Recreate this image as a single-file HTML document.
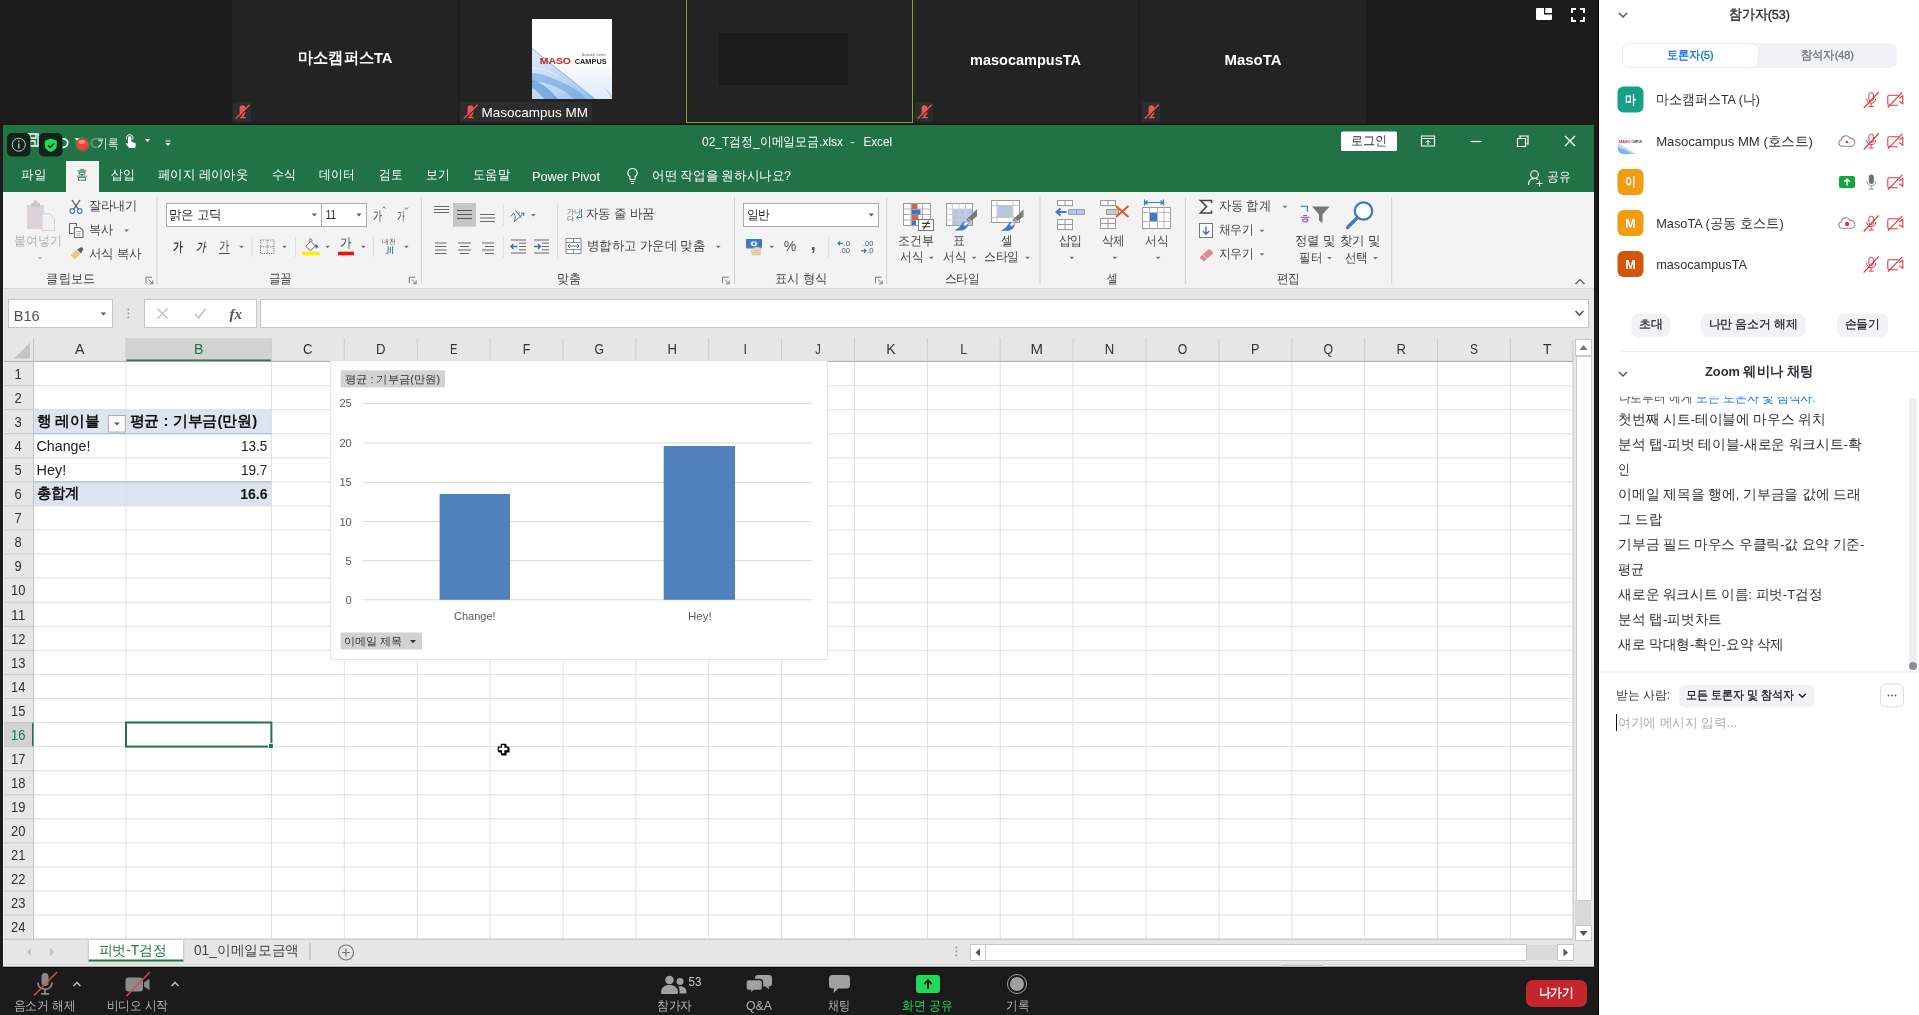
<!DOCTYPE html>
<html><head><meta charset="utf-8"><title>Zoom</title>
<style>
*{box-sizing:border-box;margin:0;padding:0}
html,body{width:1919px;height:1015px;overflow:hidden;background:#1b1b1b;font-family:"Liberation Sans",sans-serif;}
.a{position:absolute}
.t{position:absolute;white-space:nowrap;line-height:1}
svg{position:absolute;overflow:visible}
</style></head><body>
<!-- p1_zoom -->
<div class="a" style="left:232px;top:0;width:226px;height:123px;background:#232323"></div>
<div class="a" style="left:459px;top:0;width:226px;height:123px;background:#232323"></div>
<div class="a" style="left:686px;top:0;width:226px;height:123px;background:#232323"></div>
<div class="a" style="left:913px;top:0;width:226px;height:123px;background:#232323"></div>
<div class="a" style="left:1140px;top:0;width:226px;height:123px;background:#232323"></div>
<div class="a" style="left:686px;top:-2px;width:227px;height:125px;border:1px solid #86a81f"></div>
<div class="a" style="left:719px;top:33px;width:129px;height:52px;background:#1b1b1b"></div>
<div class="a" style="left:233px;top:102px;width:18px;height:20px;background:#2d2d2d;border-radius:2px"></div>
<svg style="left:233.3px;top:102.3px" width="18" height="20" viewBox="0 0 18 20">
<rect x="6.6" y="3.3" width="5.7" height="10.2" rx="2.85" fill="#f05454"/>
<path d="M9.5 13v2.5" stroke="#f05454" stroke-width="2.2"/>
<path d="M6.8 15.6h6" stroke="#f05454" stroke-width="1.3"/>
<path d="M3.7 17.3L17.5 3.5" stroke="#2d2d2d" stroke-width="1.3"/>
<path d="M2.8 16.5L16.6 2.7" stroke="#f05454" stroke-width="1.3"/>
</svg>
<div class="a" style="left:915px;top:102px;width:18px;height:20px;background:#2d2d2d;border-radius:2px"></div>
<svg style="left:915.3px;top:102.3px" width="18" height="20" viewBox="0 0 18 20">
<rect x="6.6" y="3.3" width="5.7" height="10.2" rx="2.85" fill="#f05454"/>
<path d="M9.5 13v2.5" stroke="#f05454" stroke-width="2.2"/>
<path d="M6.8 15.6h6" stroke="#f05454" stroke-width="1.3"/>
<path d="M3.7 17.3L17.5 3.5" stroke="#2d2d2d" stroke-width="1.3"/>
<path d="M2.8 16.5L16.6 2.7" stroke="#f05454" stroke-width="1.3"/>
</svg>
<div class="a" style="left:1142px;top:102px;width:18px;height:20px;background:#2d2d2d;border-radius:2px"></div>
<svg style="left:1142.3px;top:102.3px" width="18" height="20" viewBox="0 0 18 20">
<rect x="6.6" y="3.3" width="5.7" height="10.2" rx="2.85" fill="#f05454"/>
<path d="M9.5 13v2.5" stroke="#f05454" stroke-width="2.2"/>
<path d="M6.8 15.6h6" stroke="#f05454" stroke-width="1.3"/>
<path d="M3.7 17.3L17.5 3.5" stroke="#2d2d2d" stroke-width="1.3"/>
<path d="M2.8 16.5L16.6 2.7" stroke="#f05454" stroke-width="1.3"/>
</svg>
<div class="a" style="left:460px;top:102px;width:132px;height:20px;background:#2d2d2d;border-radius:2px"></div>
<svg style="left:460.8px;top:102.3px" width="18" height="20" viewBox="0 0 18 20">
<rect x="6.6" y="3.3" width="5.7" height="10.2" rx="2.85" fill="#f05454"/>
<path d="M9.5 13v2.5" stroke="#f05454" stroke-width="2.2"/>
<path d="M6.8 15.6h6" stroke="#f05454" stroke-width="1.3"/>
<path d="M3.7 17.3L17.5 3.5" stroke="#2d2d2d" stroke-width="1.3"/>
<path d="M2.8 16.5L16.6 2.7" stroke="#f05454" stroke-width="1.3"/>
</svg>
<svg style="left:1536px;top:8px" width="16" height="12" viewBox="0 0 16 12">
<path d="M1 0H8V6.5H16V11a1 1 0 0 1-1 1H1a1 1 0 0 1-1-1V1a1 1 0 0 1 1-1Z" fill="#fff"/>
<path d="M9.3 0H15a1 1 0 0 1 1 1V5H9.3Z" fill="#fff"/></svg>
<svg style="left:1571px;top:8px" width="14" height="14" viewBox="0 0 14 14">
<path d="M1 5V1H5M9 1H13V5M13 9V13H9M5 13H1V9" fill="none" stroke="#fff" stroke-width="2"/></svg>
<div class="a" style="left:0;top:967px;width:1599px;height:48px;background:#1b1b1b"></div>
<svg style="left:31px;top:971px" width="28" height="26" viewBox="0 0 28 26">
<rect x="10.5" y="2" width="7" height="13" rx="3.5" fill="#8a8a8a"/>
<path d="M7 11.5c0 4.2 3 6.7 7 6.7s7-2.5 7-6.7" fill="none" stroke="#8a8a8a" stroke-width="1.8"/>
<path d="M14 18.5v3.5M10 22.8h8" stroke="#8a8a8a" stroke-width="1.8" fill="none"/>
<path d="M3 24.5L26 1" stroke="#e0474c" stroke-width="1.5"/></svg>
<svg style="left:72px;top:981px" width="10" height="6" viewBox="0 0 10 6"><path d="M1.5 5L5 1.5L8.5 5" fill="none" stroke="#c8c8c8" stroke-width="1.4"/></svg>
<svg style="left:124px;top:971px" width="30" height="26" viewBox="0 0 30 26">
<rect x="1.5" y="6.5" width="17.5" height="14" rx="3" fill="#8a8a8a"/>
<path d="M20 11.5l5.5-3.8v11.6L20 15.5Z" fill="#8a8a8a"/>
<path d="M2.5 25L26 1" stroke="#e0474c" stroke-width="1.5"/></svg>
<svg style="left:170px;top:981px" width="10" height="6" viewBox="0 0 10 6"><path d="M1.5 5L5 1.5L8.5 5" fill="none" stroke="#c8c8c8" stroke-width="1.4"/></svg>
<svg style="left:661px;top:975px" width="26" height="19" viewBox="0 0 26 19">
<circle cx="8.5" cy="5" r="4.3" fill="#a0a0a0"/><path d="M0 17.5c0-5 3.5-7.5 8.5-7.5s8.5 2.5 8.5 7.5c0 .8-.5 1.5-1.5 1.5H1.5C.5 19 0 18.3 0 17.5Z" fill="#a0a0a0"/>
<circle cx="19" cy="6.5" r="3.5" fill="#a0a0a0"/><path d="M17.5 11.5c4.5-.8 8 1.5 8 5.5 0 1-.5 1.5-1.5 1.5h-5.5c.3-3-.2-5-1-7Z" fill="#a0a0a0"/></svg>
<svg style="left:746px;top:975px" width="26" height="19" viewBox="0 0 26 19">
<path d="M12 0h11a3 3 0 0 1 3 3v5.5a3 3 0 0 1-3 3h-.5l.8 3-3.6-3H12a3 3 0 0 1-3-3V3a3 3 0 0 1 3-3Z" fill="#a0a0a0"/>
<path d="M3 4.5h10.5a3 3 0 0 1 3 3v5a3 3 0 0 1-3 3H8L4 18.8l.5-3.3H3a3 3 0 0 1-3-3v-5a3 3 0 0 1 3-3Z" fill="#a0a0a0" stroke="#1b1b1b" stroke-width="1.4"/></svg>
<svg style="left:829px;top:975px" width="21" height="19" viewBox="0 0 21 19">
<path d="M3.5 0h14a3.5 3.5 0 0 1 3.5 3.5v6.5a3.5 3.5 0 0 1-3.5 3.5H9.5L4.5 18l.5-4.5H3.5A3.5 3.5 0 0 1 0 10V3.5A3.5 3.5 0 0 1 3.5 0Z" fill="#a0a0a0"/></svg>
<div class="a" style="left:916px;top:975px;width:24px;height:18px;background:#23d959;border-radius:3px"></div>
<svg style="left:922px;top:978px" width="12" height="12" viewBox="0 0 12 12"><path d="M6 11V2.5M2.3 6L6 2.2L9.7 6" fill="none" stroke="#111" stroke-width="1.8"/></svg>
<div class="a" style="left:1007px;top:974px;width:20px;height:20px;border-radius:50%;border:1.5px solid #a0a0a0"></div>
<div class="a" style="left:1010px;top:977px;width:14px;height:14px;border-radius:50%;background:#a0a0a0"></div>
<div class="a" style="left:1526px;top:980px;width:61px;height:27px;background:#c5262d;border-radius:7px"></div>
<svg style="left:0;top:0;font-family:'Liberation Sans',sans-serif;will-change:transform;" width="1919" height="1015" viewBox="0 0 1919 1015">
<text x="298" y="62.9" textLength="94.5" lengthAdjust="spacingAndGlyphs" font-size="15.5" fill="#fff" font-weight="bold">마소캠퍼스TA</text>
<text x="970" y="64.5" textLength="111" lengthAdjust="spacingAndGlyphs" font-size="15" fill="#fff" font-weight="bold">masocampusTA</text>
<text x="1224.5" y="64.5" textLength="57" lengthAdjust="spacingAndGlyphs" font-size="15" fill="#fff" font-weight="bold">MasoTA</text>
<defs><linearGradient id="lg1" x1="0" y1="0" x2="0" y2="1"><stop offset="0" stop-color="#fff"/><stop offset=".5" stop-color="#fff"/><stop offset="1" stop-color="#dfeaf8"/></linearGradient><linearGradient id="lg2" x1="0" y1="0" x2="1" y2="1"><stop offset="0" stop-color="#dce9f8"/><stop offset=".6" stop-color="#bcd6f1"/><stop offset="1" stop-color="#8fbbe8"/></linearGradient><clipPath id="lgc"><rect x="532" y="19" width="80" height="80"/></clipPath></defs>
<g clip-path="url(#lgc)"><rect x="532" y="19" width="80" height="80" fill="url(#lg1)"/><path d="M532 48.5L595 99H532z" fill="url(#lg2)"/><path d="M532 48.5L595 99" stroke="#7fb4ea" stroke-width="1" fill="none"/><path d="M532 80c8 2 18 9 26 19h-14c-4-5-8-9-12-11z" fill="#3f86cf" opacity=".55"/><path d="M532 73c14 1 24 7 36 12 8 4 14 9 18 14h-12c-8-8-16-12-26-15-6-2-11-2-16-2z" fill="#5a9bdc" opacity=".5"/><path d="M532 68c10 0 18 3 26 8" stroke="#eaf3fc" stroke-width="1.2" fill="none" opacity=".8"/><path d="M604 86l8 10v3z" fill="#9cc4ec" opacity=".7"/></g>
<text x="539.7" y="63.5" textLength="31.3" lengthAdjust="spacingAndGlyphs" font-size="9.6" fill="#c8201c" font-weight="bold">MASO</text>
<text x="574.7" y="63.6" textLength="32" lengthAdjust="spacingAndGlyphs" font-size="7.8" fill="#222" font-weight="bold">CAMPUS</text>
<text x="582" y="56.1" textLength="23.7" lengthAdjust="spacingAndGlyphs" font-size="2.6" fill="#666">Actionable Content</text>
<text x="481.5" y="117" textLength="106.5" lengthAdjust="spacingAndGlyphs" font-size="12.8" fill="#fff">Masocampus MM</text>
<text x="13.5" y="1009.8" textLength="62" lengthAdjust="spacingAndGlyphs" font-size="12.5" fill="#b4b4b4">음소거 해제</text>
<text x="106.7" y="1009.8" textLength="61.1" lengthAdjust="spacingAndGlyphs" font-size="12.5" fill="#b4b4b4">비디오 시작</text>
<text x="688.6" y="985.6" textLength="12.9" lengthAdjust="spacingAndGlyphs" font-size="12" fill="#c8c8c8">53</text>
<text x="657" y="1009.8" textLength="35" lengthAdjust="spacingAndGlyphs" font-size="12.5" fill="#b4b4b4">참가자</text>
<text x="746" y="1010.2" textLength="26" lengthAdjust="spacingAndGlyphs" font-size="13" fill="#b4b4b4">Q&amp;A</text>
<text x="827.8" y="1009.8" textLength="22.2" lengthAdjust="spacingAndGlyphs" font-size="12.5" fill="#b4b4b4">채팅</text>
<text x="902" y="1009.8" textLength="50.5" lengthAdjust="spacingAndGlyphs" font-size="12.5" fill="#23d959">화면 공유</text>
<text x="1006" y="1009.8" textLength="23" lengthAdjust="spacingAndGlyphs" font-size="12.5" fill="#b4b4b4">기록</text>
<text x="1538.5" y="997" textLength="35.5" lengthAdjust="spacingAndGlyphs" font-size="12.5" fill="#fff" font-weight="bold">나가기</text>
</svg>
<!-- p2_ribbon -->
<div class="a" style="left:0;top:125px;width:3px;height:842px;background:#1b1b1b"></div>
<div class="a" style="left:3px;top:125px;width:1591px;height:67px;background:#217346"></div>
<div class="a" style="left:3px;top:192px;width:1591px;height:96px;background:#f3f3f3"></div>
<div class="a" style="left:3px;top:288px;width:1591px;height:50px;background:#e6e6e6;border-top:1px solid #d6d6d6"></div>
<div class="a" style="left:1594px;top:125px;width:5px;height:842px;background:#1b1b1b"></div>
<div class="a" style="left:66px;top:161px;width:33px;height:32px;background:#f3f3f3"></div>
<svg style="left:0;top:0;font-family:'Liberation Sans',sans-serif;will-change:transform;" width="1919" height="1015" viewBox="0 0 1919 1015">
<path d="M27 134h11v12h-11zM30 134v4h6v-4M30 146v-5h5v5" fill="none" stroke="#fff" stroke-width="1.3"/>
<path d="M58 141.5a5 4.3 0 1 1 4 5.8" fill="none" stroke="#fff" stroke-width="1.8"/><path d="M54.5 138.5l5.5-1-1 5.5z" fill="#fff"/>
<path d="M74.5 138.1h5l-2.5 2.8z" fill="#fff"/>
<path d="M101 141.5a5 4.3 0 1 0-4 5.8" fill="none" stroke="#5f9c79" stroke-width="1.8"/><path d="M104.5 138.5l-5.5-1 1 5.5z" fill="#5f9c79"/>
<text x="97" y="147.8" textLength="21" lengthAdjust="spacingAndGlyphs" font-size="12.5" fill="#e9f2ec">기록</text>
<path d="M128 137.8a1.7 1.7 0 0 1 3.4 0v4l3 .9c1 .4 1.5 1 1.3 2l-.6 3.3h-6l-3.3-4.3c.6-.8 1.5-.6 2.2 0z" fill="#fff"/><path d="M126.8 139.5a3.3 3.3 0 1 1 5.8 0" fill="none" stroke="#fff" stroke-width="1"/>
<path d="M145 139.1h5l-2.5 2.8z" fill="#fff"/>
<path d="M165.5 141h5" stroke="#fff" stroke-width="1"/><path d="M165.5 143.1h5l-2.5 2.8z" fill="#fff"/>
<rect x="7" y="133" width="23.5" height="23.5" fill="#10241a" rx="5"/>
<circle cx="18.8" cy="144.7" r="6.5" fill="none" stroke="#c9d1cc" stroke-width="1"/><path d="M18.8 143.5v5M18.8 140.6v1.5" stroke="#c9d1cc" stroke-width="1.3"/>
<rect x="39" y="133" width="23.5" height="23.5" fill="#10241a" rx="5"/>
<path d="M50.8 138.5l6 2.2v4.3c0 3.5-2.5 5.8-6 7-3.5-1.2-6-3.5-6-7v-4.3z" fill="#23d959"/><path d="M48 145.3l2.2 2.2 3.8-4" stroke="#10241a" stroke-width="1.5" fill="none"/>
<circle cx="82.5" cy="144.5" r="7.5" fill="#d9603f" opacity=".35"/><circle cx="82.5" cy="144.5" r="5.6" fill="#f0433c"/><ellipse cx="82" cy="142" rx="3.5" ry="2" fill="#ff9a90" opacity=".8"/>
<text x="702" y="145.9" textLength="141" lengthAdjust="spacingAndGlyphs" font-size="13" fill="#fff">02_T검정_이메일모금.xlsx</text>
<text x="850" y="145.9" textLength="5" lengthAdjust="spacingAndGlyphs" font-size="13" fill="#cfe3d6">-</text>
<text x="863.5" y="146.1" textLength="28.5" lengthAdjust="spacingAndGlyphs" font-size="13" fill="#fff">Excel</text>
<rect x="1341" y="131.5" width="56" height="19.5" fill="#fff" rx="1.5"/>
<text x="1351" y="144.8" textLength="36" lengthAdjust="spacingAndGlyphs" font-size="12.5" fill="#333">로그인</text>
<path d="M1421.5 136h13v10h-13zM1421.5 138.5h13" fill="none" stroke="#fff" stroke-width="1.2"/><path d="M1428 145v-4.5M1425.8 142.5l2.2-2.2 2.2 2.2" fill="none" stroke="#fff" stroke-width="1"/>
<path d="M1470.5 141.5L1481.5 141.5" stroke="#fff" stroke-width="1.2" fill="none"/>
<path d="M1517.5 138.5h8v8h-8zM1520 138.5v-2.5h8v8h-2.5" fill="none" stroke="#fff" stroke-width="1.2"/>
<path d="M1565 136l10 10M1575 136l-10 10" stroke="#fff" stroke-width="1.3"/>
<circle cx="1534.5" cy="174.5" r="3.8" fill="none" stroke="#fff" stroke-width="1.1"/><path d="M1528.5 185c0-4.5 2.5-6.5 6-6.5 1.5 0 2.5.3 3.5 1M1539.5 180.5v6M1536.5 183.5h6" fill="none" stroke="#fff" stroke-width="1.1"/>
<text x="1547" y="181.2" textLength="23.5" lengthAdjust="spacingAndGlyphs" font-size="12.5" fill="#fff">공유</text>
<text x="21" y="179.4" textLength="25" lengthAdjust="spacingAndGlyphs" font-size="13" fill="#fff">파일</text>
<text x="111" y="179.4" textLength="24" lengthAdjust="spacingAndGlyphs" font-size="13" fill="#fff">삽입</text>
<text x="158" y="179.4" textLength="90" lengthAdjust="spacingAndGlyphs" font-size="13" fill="#fff">페이지 레이아웃</text>
<text x="272" y="179.4" textLength="24" lengthAdjust="spacingAndGlyphs" font-size="13" fill="#fff">수식</text>
<text x="319" y="179.4" textLength="35.5" lengthAdjust="spacingAndGlyphs" font-size="13" fill="#fff">데이터</text>
<text x="379" y="179.4" textLength="23.5" lengthAdjust="spacingAndGlyphs" font-size="13" fill="#fff">검토</text>
<text x="426" y="179.4" textLength="23.5" lengthAdjust="spacingAndGlyphs" font-size="13" fill="#fff">보기</text>
<text x="473" y="179.4" textLength="37" lengthAdjust="spacingAndGlyphs" font-size="13" fill="#fff">도움말</text>
<text x="532" y="180.8" textLength="68" lengthAdjust="spacingAndGlyphs" font-size="13" fill="#fff">Power Pivot</text>
<text x="652" y="180" textLength="139" lengthAdjust="spacingAndGlyphs" font-size="13" fill="#fff">어떤 작업을 원하시나요?</text>
<text x="76" y="179.4" textLength="12" lengthAdjust="spacingAndGlyphs" font-size="13" fill="#217346">홈</text>
<path d="M632.5 168.5a4.5 4.5 0 0 1 2.5 8.3v2.7h-5v-2.7a4.5 4.5 0 0 1 2.5-8.3zM630.5 181.5h4M631 183.5h3" fill="none" stroke="#fff" stroke-width="1.1"/>
<path d="M157 197L157 284" stroke="#d0d0d0" stroke-width="1" fill="none"/>
<path d="M421.3 197L421.3 284" stroke="#d0d0d0" stroke-width="1" fill="none"/>
<path d="M734.5 197L734.5 284" stroke="#d0d0d0" stroke-width="1" fill="none"/>
<path d="M886.7 197L886.7 284" stroke="#d0d0d0" stroke-width="1" fill="none"/>
<path d="M1040 197L1040 284" stroke="#d0d0d0" stroke-width="1" fill="none"/>
<path d="M1185.4 197L1185.4 284" stroke="#d0d0d0" stroke-width="1" fill="none"/>
<path d="M1391.7 197L1391.7 284" stroke="#d0d0d0" stroke-width="1" fill="none"/>
<text x="46.4" y="283.1" textLength="48.8" lengthAdjust="spacingAndGlyphs" font-size="12.5" fill="#444">클립보드</text>
<text x="268.8" y="283.1" textLength="23.4" lengthAdjust="spacingAndGlyphs" font-size="12.5" fill="#444">글꼴</text>
<text x="557" y="283.1" textLength="23.8" lengthAdjust="spacingAndGlyphs" font-size="12.5" fill="#444">맞춤</text>
<text x="775" y="283.1" textLength="52.5" lengthAdjust="spacingAndGlyphs" font-size="12.5" fill="#444">표시 형식</text>
<text x="944.7" y="283.1" textLength="35.3" lengthAdjust="spacingAndGlyphs" font-size="12.5" fill="#444">스타일</text>
<text x="1107" y="283.1" textLength="10.7" lengthAdjust="spacingAndGlyphs" font-size="12.5" fill="#444">셀</text>
<text x="1276.8" y="283.1" textLength="23.2" lengthAdjust="spacingAndGlyphs" font-size="12.5" fill="#444">편집</text>
<path d="M146 283.2v-6h6M148.5 279.5l4 4M152.8 280.5v3.3h-3.3" fill="none" stroke="#777" stroke-width="1"/>
<path d="M409.3 283.2v-6h6M411.8 279.5l4 4M416.1 280.5v3.3h-3.3" fill="none" stroke="#777" stroke-width="1"/>
<path d="M722.5 283.2v-6h6M725 279.5l4 4M729.3 280.5v3.3h-3.3" fill="none" stroke="#777" stroke-width="1"/>
<path d="M875.5 283.2v-6h6M878 279.5l4 4M882.3 280.5v3.3h-3.3" fill="none" stroke="#777" stroke-width="1"/>
<path d="M1575.5 284l4.5-4.5 4.5 4.5" fill="none" stroke="#555" stroke-width="1.2"/>
<path d="M27 205h17v24h-17z" fill="#dcd3d9"/><path d="M31 203h9v3.5h-9z" fill="#cfc5cc"/><path d="M33.5 200.5h4v3h-4z" fill="#cfc5cc"/>
<path d="M42 214h8l4.5 4.5v12h-12.5z" fill="#f4eff3" stroke="#d8d0d6" stroke-width="1"/>
<text x="13.6" y="245.2" textLength="48.4" lengthAdjust="spacingAndGlyphs" font-size="12.5" fill="#b3b3b3">붙여넣기</text>
<path d="M37.5 257.1h5l-2.5 2.8z" fill="#c4c4c4"/>
<path d="M72 200l6.5 9.5M80 200l-6.5 9.5" stroke="#555" stroke-width="1.3" fill="none"/><circle cx="72.3" cy="211" r="2.3" fill="none" stroke="#4a7ab5" stroke-width="1.2"/><circle cx="79.7" cy="211" r="2.3" fill="none" stroke="#4a7ab5" stroke-width="1.2"/>
<text x="88.6" y="210.2" textLength="48.8" lengthAdjust="spacingAndGlyphs" font-size="12.5" fill="#444">잘라내기</text>
<path d="M69.5 223.5h7l0 3M69.5 223.5v10h4" fill="none" stroke="#666" stroke-width="1.1"/><path d="M74.5 227.5h5.5l3 3v7h-8.5z" fill="#fff" stroke="#666" stroke-width="1.1"/><path d="M76.5 231.5h4M76.5 233.5h4M76.5 235.5h4" stroke="#888" stroke-width=".8"/>
<text x="88.6" y="234.2" textLength="24.1" lengthAdjust="spacingAndGlyphs" font-size="12.5" fill="#444">복사</text>
<path d="M124.2 229.5h4.6l-2.3 2.5z" fill="#707070"/>
<path d="M70.5 255l6-5 4 4-6 5.5z" fill="#e8c97a"/><path d="M77 249.5l4.5-2.5 2 2-2.5 4.5z" fill="#6a5a4a"/>
<text x="88.6" y="258.4" textLength="53.2" lengthAdjust="spacingAndGlyphs" font-size="12.5" fill="#444">서식 복사</text>
<rect x="166.5" y="203.5" width="155" height="23" fill="#fff" stroke="#ababab" stroke-width="1"/>
<rect x="321.5" y="203.5" width="45" height="23" fill="#fff" stroke="#ababab" stroke-width="1"/>
<text x="168.5" y="218.7" textLength="53.5" lengthAdjust="spacingAndGlyphs" font-size="13" fill="#222">맑은 고딕</text>
<path d="M311.8 213.6h5l-2.5 2.8z" fill="#555"/>
<text x="325.7" y="218.7" textLength="10.3" lengthAdjust="spacingAndGlyphs" font-size="13" fill="#222">11</text>
<path d="M356.5 213.6h5l-2.5 2.8z" fill="#555"/>
<text x="373" y="220.4" textLength="9" lengthAdjust="spacingAndGlyphs" font-size="13" fill="#444">가</text><path d="M382.5 208.5l1.5-1.8 1.5 1.8" fill="none" stroke="#4a7ab5" stroke-width="1"/>
<text x="397" y="220.4" textLength="8" lengthAdjust="spacingAndGlyphs" font-size="11.5" fill="#444">가</text><path d="M405 207.5l1.5 1.8 1.5-1.8" fill="none" stroke="#4a7ab5" stroke-width="1"/>
<text x="173" y="250.8" textLength="9.8" lengthAdjust="spacingAndGlyphs" font-size="12.5" fill="#333" font-weight="bold">가</text>
<text x="196" y="250.8" textLength="10" lengthAdjust="spacingAndGlyphs" font-size="12.5" fill="#333" font-style="italic" stroke="#333" stroke-width=".3">가</text>
<text x="219" y="250.2" textLength="10.4" lengthAdjust="spacingAndGlyphs" font-size="12.5" fill="#444">가</text><path d="M219 253.5L229.5 253.5" stroke="#444" stroke-width="1" fill="none"/>
<path d="M239.1 245.7h4.6l-2.3 2.5z" fill="#707070"/>
<path d="M252 237L252 257" stroke="#dcdcdc" stroke-width="1" fill="none"/>
<path d="M260.5 240v13.5h13.5v-13.5zM267.2 240v13.5M260.5 246.7h13.5" fill="none" stroke="#777" stroke-width="1" stroke-dasharray="1.2 1.2"/>
<path d="M282.2 245.7h4.6l-2.3 2.5z" fill="#707070"/>
<path d="M295.5 237L295.5 257" stroke="#dcdcdc" stroke-width="1" fill="none"/>
<path d="M305.8 246.2l5-4.8 4.6 4.6-5 4.8z" fill="#fff" stroke="#666" stroke-width="1"/><path d="M309.3 242.5v-2.3a1.3 1.3 0 0 1 2.6 0v1.5" fill="none" stroke="#666" stroke-width=".9"/><path d="M315.3 244.3c2 .5 3 1.8 3 3.6l-1.5-.6-.4 1.6c-1-1-1.5-2.6-1.1-4.6z" fill="#4a6fc0"/>
<rect x="302" y="251.7" width="17.5" height="3.6" fill="#ffef00"/>
<path d="M325.3 245.7h4.6l-2.3 2.5z" fill="#707070"/>
<text x="339.7" y="247.4" textLength="11.6" lengthAdjust="spacingAndGlyphs" font-size="13" fill="#444">가</text>
<rect x="338" y="251.7" width="16" height="3.6" fill="#ee1111"/>
<path d="M361 245.7h4.6l-2.3 2.5z" fill="#707070"/>
<path d="M373.4 237L373.4 257" stroke="#dcdcdc" stroke-width="1" fill="none"/>
<text x="382" y="244.1" textLength="13.7" lengthAdjust="spacingAndGlyphs" font-size="7" fill="#555">내천</text>
<text x="386" y="252.9" textLength="8" lengthAdjust="spacingAndGlyphs" font-size="8" fill="#3c6fb4" font-weight="bold">川</text>
<path d="M404.1 245.7h4.6l-2.3 2.5z" fill="#707070"/>
<path d="M434 206.5L449 206.5" stroke="#666" stroke-width="1" fill="none"/><path d="M434 209.5L449 209.5" stroke="#666" stroke-width="1" fill="none"/><path d="M434 212.5L449 212.5" stroke="#666" stroke-width="1" fill="none"/>
<rect x="453" y="203" width="23" height="23.7" fill="#c6c6c6"/>
<path d="M457 210.5L472 210.5" stroke="#555" stroke-width="1" fill="none"/><path d="M457 214.5L472 214.5" stroke="#555" stroke-width="1" fill="none"/><path d="M457 218.5L472 218.5" stroke="#555" stroke-width="1" fill="none"/>
<path d="M480 214.5L495 214.5" stroke="#666" stroke-width="1" fill="none"/><path d="M480 218L495 218" stroke="#666" stroke-width="1" fill="none"/><path d="M480 221.5L495 221.5" stroke="#666" stroke-width="1" fill="none"/>
<path d="M503.3 204L503.3 226" stroke="#dcdcdc" stroke-width="1" fill="none"/>
<text x="510" y="218.3" textLength="11" lengthAdjust="spacingAndGlyphs" font-size="11" fill="#666" transform="rotate(-40 517 215)">가</text>
<path d="M514 222l10-9M524 213l-3 .3M524 213l-.3 3" stroke="#4a7ab5" stroke-width="1" fill="none"/>
<path d="M531 213.9h4.6l-2.3 2.5z" fill="#707070"/>
<path d="M557.5 203L557.5 258" stroke="#dcdcdc" stroke-width="1" fill="none"/>
<text x="567" y="213.6" textLength="14" lengthAdjust="spacingAndGlyphs" font-size="7" fill="#555">가나</text><text x="567" y="220.6" textLength="7" lengthAdjust="spacingAndGlyphs" font-size="7" fill="#555">다</text>
<path d="M581.5 209v8.5h-5M578.5 215.5l-2 2 2 2" fill="none" stroke="#4a7ab5" stroke-width="1"/>
<text x="585.8" y="218.4" textLength="69.2" lengthAdjust="spacingAndGlyphs" font-size="12.5" fill="#444">자동 줄 바꿈</text>
<path d="M435 243L446.5 243" stroke="#666" stroke-width="1" fill="none"/><path d="M435 246.5L446.5 246.5" stroke="#666" stroke-width="1" fill="none"/><path d="M435 250L446.5 250" stroke="#666" stroke-width="1" fill="none"/><path d="M435 253.5L446.5 253.5" stroke="#666" stroke-width="1" fill="none"/>
<path d="M458 243L471 243" stroke="#666" stroke-width="1" fill="none"/><path d="M460 246.5L469 246.5" stroke="#666" stroke-width="1" fill="none"/><path d="M458 250L471 250" stroke="#666" stroke-width="1" fill="none"/><path d="M460 253.5L469 253.5" stroke="#666" stroke-width="1" fill="none"/>
<path d="M482 243L494 243" stroke="#666" stroke-width="1" fill="none"/><path d="M485 246.5L494 246.5" stroke="#666" stroke-width="1" fill="none"/><path d="M482 250L494 250" stroke="#666" stroke-width="1" fill="none"/><path d="M485 253.5L494 253.5" stroke="#666" stroke-width="1" fill="none"/>
<path d="M503.3 236L503.3 258" stroke="#dcdcdc" stroke-width="1" fill="none"/>
<path d="M511 240L526 240" stroke="#666" stroke-width="1" fill="none"/><path d="M511 253L526 253" stroke="#666" stroke-width="1" fill="none"/><path d="M519 243.2L526 243.2" stroke="#666" stroke-width="1" fill="none"/><path d="M519 246.5L526 246.5" stroke="#666" stroke-width="1" fill="none"/><path d="M519 249.8L526 249.8" stroke="#666" stroke-width="1" fill="none"/>
<path d="M517.5 246.5h-6M513.5 244l-2.5 2.5 2.5 2.5" fill="none" stroke="#3c6fb4" stroke-width="1.4"/>
<path d="M534 240L549 240" stroke="#666" stroke-width="1" fill="none"/><path d="M534 253L549 253" stroke="#666" stroke-width="1" fill="none"/><path d="M542 243.2L549 243.2" stroke="#666" stroke-width="1" fill="none"/><path d="M542 246.5L549 246.5" stroke="#666" stroke-width="1" fill="none"/><path d="M542 249.8L549 249.8" stroke="#666" stroke-width="1" fill="none"/>
<path d="M534 246.5h6M538 244l2.5 2.5-2.5 2.5" fill="none" stroke="#3c6fb4" stroke-width="1.4"/>
<path d="M566 238.5h15v15h-15zM566 242.5h15M566 249.5h15M573.5 238.5v4M573.5 249.5v4" fill="#fff" stroke="#888" stroke-width="1"/>
<path d="M568 246h11M570 244l-2 2 2 2M577 244l2 2-2 2" fill="none" stroke="#3c6fb4" stroke-width="1"/>
<text x="586.7" y="250.4" textLength="118.6" lengthAdjust="spacingAndGlyphs" font-size="12.5" fill="#444">병합하고 가운데 맞춤</text>
<path d="M716 245.7h4.6l-2.3 2.5z" fill="#707070"/>
</svg>
<!-- p2b_ribbon -->
<svg style="left:0;top:0;font-family:'Liberation Sans',sans-serif;will-change:transform;" width="1919" height="1015" viewBox="0 0 1919 1015">
<rect x="743.5" y="203.5" width="135" height="23" fill="#fff" stroke="#ababab" stroke-width="1"/>
<text x="746.7" y="218.7" textLength="23.3" lengthAdjust="spacingAndGlyphs" font-size="13" fill="#222">일반</text>
<path d="M868.8 213.6h5l-2.5 2.8z" fill="#555"/>
<rect x="746" y="239" width="16" height="9.5" fill="#3c78c3" rx="1"/>
<ellipse cx="754" cy="243.7" rx="3.3" ry="2.5" fill="#dbe8f7"/><circle cx="754" cy="243.7" r="1.2" fill="#3c78c3"/>
<path d="M751 250.5h10M751 252.5h10M752 254.5h9" stroke="#e3c48c" stroke-width="1.4"/><ellipse cx="757" cy="248.5" rx="4" ry="1.5" fill="#ecd5a8"/>
<path d="M769.4 245.7h4.6l-2.3 2.5z" fill="#707070"/>
<text x="783.7" y="251.2" textLength="12.6" lengthAdjust="spacingAndGlyphs" font-size="15" fill="#555">%</text>
<text x="810.8" y="249.5" textLength="5" lengthAdjust="spacingAndGlyphs" font-size="20" fill="#555" font-weight="bold">,</text>
<path d="M828.7 237L828.7 258" stroke="#dcdcdc" stroke-width="1" fill="none"/>
<text x="843.5" y="245.6" textLength="6.5" lengthAdjust="spacingAndGlyphs" font-size="7.5" fill="#555">.0</text><text x="839.5" y="253.1" textLength="10.5" lengthAdjust="spacingAndGlyphs" font-size="7.5" fill="#555">.00</text>
<path d="M843 243.3h-5M840 241.3l-2 2 2 2" fill="none" stroke="#3c6fb4" stroke-width="1.2"/>
<text x="863" y="245.6" textLength="10.5" lengthAdjust="spacingAndGlyphs" font-size="7.5" fill="#555">.00</text><text x="867" y="253.1" textLength="6.5" lengthAdjust="spacingAndGlyphs" font-size="7.5" fill="#555">.0</text>
<path d="M861 250.8h5M864 248.8l2 2-2 2" fill="none" stroke="#3c6fb4" stroke-width="1.2"/>
<rect x="903.5" y="203.5" width="27" height="22" fill="#fff" stroke="#999" stroke-width="1"/>
<path d="M903.5 209h27M903.5 214.5h27M903.5 220h27M911 203.5v22M922.5 203.5v22" stroke="#b0b0b0" stroke-width="1" fill="none"/>
<rect x="911.5" y="204" width="6" height="5" fill="#d9604c"/><rect x="911.5" y="209.5" width="9" height="5" fill="#3c78c3"/><rect x="911.5" y="215" width="7" height="5" fill="#d9604c"/><rect x="911.5" y="220.5" width="4.5" height="4.5" fill="#3c78c3"/>
<rect x="918.5" y="219.5" width="15" height="11" fill="#fff" stroke="#777" stroke-width="1"/>
<text x="921.5" y="230.3" textLength="9" lengthAdjust="spacingAndGlyphs" font-size="15" fill="#333">≠</text>
<text x="898.3" y="244.6" textLength="35.9" lengthAdjust="spacingAndGlyphs" font-size="12.5" fill="#444">조건부</text>
<text x="900" y="261.2" textLength="23.3" lengthAdjust="spacingAndGlyphs" font-size="12.5" fill="#444">서식</text><path d="M929 256.7h4.6l-2.3 2.5z" fill="#707070"/>
<rect x="946.5" y="203.5" width="26" height="22" fill="#fff" stroke="#999" stroke-width="1"/>
<rect x="952.5" y="209" width="19.5" height="16" fill="#b7c6e0"/>
<path d="M946.5 209h26M946.5 214.5h26M946.5 220h26M952.5 203.5v22M959 203.5v22M965.5 203.5v22" stroke="#c9d1de" stroke-width="1" fill="none"/>
<g transform="translate(0 0)"><path d="M977 209v7l-7.3 6-3.5-2.3z" fill="#7a7a7a"/><path d="M954 230.5c4-1.5 7-4.5 9.5-9l4.5 2.5c.5 2.5-2 5.5-6 6.5z" fill="#3c78c3"/><ellipse cx="965.8" cy="223.8" rx="2.6" ry="1.7" fill="#fff" stroke="#5b8fd0" stroke-width=".7" transform="rotate(-38 965.8 223.8)"/><path d="M968.6 219.3l2.6 2" stroke="#f3f3f3" stroke-width="1"/></g>
<text x="953.3" y="244.6" textLength="12" lengthAdjust="spacingAndGlyphs" font-size="12.5" fill="#444">표</text>
<text x="943.3" y="261.2" textLength="23" lengthAdjust="spacingAndGlyphs" font-size="12.5" fill="#444">서식</text><path d="M971.9 256.7h4.6l-2.3 2.5z" fill="#707070"/>
<rect x="991.5" y="200.5" width="28" height="22" fill="#fff" stroke="#999" stroke-width="1"/>
<path d="M991.5 205.5h28M991.5 217.5h28M997 200.5v22M1013 200.5v22" stroke="#c4c4c4" stroke-width="1" fill="none"/>
<rect x="997.5" y="206" width="15" height="11" fill="#b7c6e0"/>
<g transform="translate(46.5 0.3)"><path d="M977 209v7l-7.3 6-3.5-2.3z" fill="#7a7a7a"/><path d="M954 230.5c4-1.5 7-4.5 9.5-9l4.5 2.5c.5 2.5-2 5.5-6 6.5z" fill="#3c78c3"/><ellipse cx="965.8" cy="223.8" rx="2.6" ry="1.7" fill="#fff" stroke="#5b8fd0" stroke-width=".7" transform="rotate(-38 965.8 223.8)"/><path d="M968.6 219.3l2.6 2" stroke="#f3f3f3" stroke-width="1"/></g>
<text x="1000.8" y="244.6" textLength="11.7" lengthAdjust="spacingAndGlyphs" font-size="12.5" fill="#444">셀</text>
<text x="983.7" y="261.2" textLength="35.5" lengthAdjust="spacingAndGlyphs" font-size="12.5" fill="#444">스타일</text><path d="M1025.2 256.7h4.6l-2.3 2.5z" fill="#707070"/>
<rect x="1057.5" y="200.5" width="15" height="5" fill="#fff" stroke="#999" stroke-width="1"/><path d="M1065 200.5L1065 205.5" stroke="#999" stroke-width="1" fill="none"/>
<rect x="1068.5" y="209.5" width="16" height="5" fill="#b7c6e0" stroke="#8fa4c4" stroke-width="1"/><path d="M1076.5 209.5L1076.5 214.5" stroke="#8fa4c4" stroke-width="1" fill="none"/>
<path d="M1066.5 212h-10M1060.5 208.5l-4 3.5 4 3.5" fill="none" stroke="#3c78c3" stroke-width="2"/>
<rect x="1057.5" y="219.5" width="15" height="10" fill="#fff" stroke="#999" stroke-width="1"/><path d="M1065 219.5L1065 229.5" stroke="#999" stroke-width="1" fill="none"/><path d="M1057.5 224.5L1072.5 224.5" stroke="#999" stroke-width="1" fill="none"/>
<text x="1058.5" y="244.8" textLength="23.9" lengthAdjust="spacingAndGlyphs" font-size="12.5" fill="#444">삽입</text><path d="M1069.5 256.7h4.6l-2.3 2.5z" fill="#707070"/>
<rect x="1100.5" y="200.5" width="15" height="5" fill="#fff" stroke="#999" stroke-width="1"/><path d="M1108 200.5L1108 205.5" stroke="#999" stroke-width="1" fill="none"/>
<rect x="1106.5" y="209.5" width="12" height="5" fill="#c9c9c9" stroke="#999" stroke-width="1"/>
<rect x="1100.5" y="218.5" width="15" height="10" fill="#fff" stroke="#999" stroke-width="1"/><path d="M1108 218.5L1108 228.5" stroke="#999" stroke-width="1" fill="none"/><path d="M1100.5 223.5L1115.5 223.5" stroke="#999" stroke-width="1" fill="none"/>
<path d="M1116 206l12.5 11M1128.5 206l-12.5 11" stroke="#e0552f" stroke-width="1.8" fill="none"/>
<text x="1101.7" y="244.8" textLength="23.2" lengthAdjust="spacingAndGlyphs" font-size="12.5" fill="#444">삭제</text><path d="M1112.5 256.7h4.6l-2.3 2.5z" fill="#707070"/>
<path d="M1145 202.5h18M1147.5 200.5l-2.5 2 2.5 2M1160.5 200.5l2.5 2-2.5 2M1144.5 199.5v6M1163.5 199.5v6" fill="none" stroke="#3c78c3" stroke-width="1.2"/>
<rect x="1142.5" y="207.5" width="28" height="21" fill="#fff" stroke="#999" stroke-width="1"/>
<path d="M1142.5 212.5h28M1142.5 221.5h28M1149.5 207.5v21M1157.5 207.5v21M1164 207.5v21" stroke="#bbb" stroke-width="1" fill="none"/>
<rect x="1150" y="213" width="7" height="8" fill="#3c78c3"/>
<text x="1145" y="244.8" textLength="23.3" lengthAdjust="spacingAndGlyphs" font-size="12.5" fill="#444">서식</text><path d="M1155.9 256.7h4.6l-2.3 2.5z" fill="#707070"/>
<path d="M1211.5 203v-2.5h-11l6 6-6 6.5h11v-2.5" fill="none" stroke="#444" stroke-width="1.6"/>
<text x="1218.6" y="210.2" textLength="52.4" lengthAdjust="spacingAndGlyphs" font-size="12.5" fill="#444">자동 합계</text><path d="M1282.7 205.7h4.6l-2.3 2.5z" fill="#707070"/>
<rect x="1199.5" y="223.5" width="13" height="14" fill="#fff" stroke="#777" stroke-width="1"/>
<path d="M1206 226.5v7.5M1202.8 231l3.2 3.2 3.2-3.2" fill="none" stroke="#3c78c3" stroke-width="1.5"/>
<text x="1218.6" y="234.2" textLength="35.7" lengthAdjust="spacingAndGlyphs" font-size="12.5" fill="#444">채우기</text><path d="M1259.7 229.7h4.6l-2.3 2.5z" fill="#707070"/>
<path d="M1200 257l8.5-7.5a1.2 1.2 0 0 1 1.6 0l2.6 2.6a1.2 1.2 0 0 1 0 1.6l-8 7a1.2 1.2 0 0 1-1.6 0l-3-2.6a.8.8 0 0 1-.1-1.1z" fill="#ee7f98"/><path d="M1202.8 254.8l4 3.8" stroke="#f9d5dc" stroke-width="1"/>
<text x="1218.6" y="257.8" textLength="35.7" lengthAdjust="spacingAndGlyphs" font-size="12.5" fill="#444">지우기</text><path d="M1259.7 253.2h4.6l-2.3 2.5z" fill="#707070"/>
<text x="1299" y="213.1" textLength="11" lengthAdjust="spacingAndGlyphs" font-size="12" fill="#3c78c3" font-weight="bold">ㄱ</text>
<text x="1299" y="223.4" textLength="12.5" lengthAdjust="spacingAndGlyphs" font-size="12" fill="#8e5bc0" font-weight="bold">ㅎ</text>
<path d="M1312 206.5h17.5l-7 8v8.5l-3.5-2.5v-6z" fill="#777"/>
<text x="1294.6" y="244.8" textLength="40.4" lengthAdjust="spacingAndGlyphs" font-size="12.5" fill="#444">정렬 및</text>
<text x="1299" y="261.6" textLength="23" lengthAdjust="spacingAndGlyphs" font-size="12.5" fill="#444">필터</text><path d="M1327.2 257h4.6l-2.3 2.5z" fill="#707070"/>
<circle cx="1363.5" cy="211" r="8.7" fill="#fff" stroke="#3c78c3" stroke-width="2.2"/><path d="M1357 218l-9.5 9.5" stroke="#3c78c3" stroke-width="3.2" stroke-linecap="round"/>
<text x="1340" y="244.8" textLength="40.6" lengthAdjust="spacingAndGlyphs" font-size="12.5" fill="#444">찾기 및</text>
<text x="1344.7" y="261.6" textLength="23.1" lengthAdjust="spacingAndGlyphs" font-size="12.5" fill="#444">선택</text><path d="M1373.2 257h4.6l-2.3 2.5z" fill="#707070"/>
<rect x="8.5" y="299.5" width="104" height="28" fill="#fff" stroke="#c6c6c6" stroke-width="1"/>
<text x="13.8" y="320.8" textLength="25.8" lengthAdjust="spacingAndGlyphs" font-size="15" fill="#505050">B16</text>
<path d="M100.7 312.5h5.5l-2.8 3z" fill="#555"/>
<circle cx="128.4" cy="309.5" r="1" fill="#999"/><circle cx="128.4" cy="313.5" r="1" fill="#999"/><circle cx="128.4" cy="317.5" r="1" fill="#999"/>
<rect x="144.5" y="299.5" width="112" height="28" fill="#fff" stroke="#c6c6c6" stroke-width="1"/>
<path d="M157.5 308.5l10 10M167.5 308.5l-10 10" stroke="#c2c2c2" stroke-width="1.5"/>
<path d="M195 314l3.5 4 7-9" stroke="#c2c2c2" stroke-width="1.6" fill="none"/>
<text x="229.5" y="318.5" font-size="15" font-style="italic" font-weight="bold" fill="#555" style="font-family:'Liberation Serif',serif">fx</text>
<rect x="260.5" y="299.5" width="1328" height="28" fill="#fff" stroke="#c6c6c6" stroke-width="1"/>
<path d="M1575.5 311l4 4 4-4" fill="none" stroke="#555" stroke-width="1.6"/>
</svg>
<!-- p3_grid -->
<div class="a" style="left:3px;top:338px;width:1591px;height:629px;background:#e6e6e6"></div>
<div class="a" style="left:33.5px;top:361.5px;width:1539.5px;height:577.7px;background:#fff"></div>
<svg style="left:0;top:0;font-family:'Liberation Sans',sans-serif;will-change:transform;" width="1919" height="1015" viewBox="0 0 1919 1015">
<rect x="33.5" y="409.6" width="237.9" height="24.1" fill="#dce4f0"/>
<rect x="33.5" y="481.9" width="237.9" height="24.1" fill="#dce4f0"/>
<path d="M33.5 385.6L1573 385.6" stroke="#e0e0e0" stroke-width="1" fill="none"/>
<path d="M33.5 409.6L1573 409.6" stroke="#e0e0e0" stroke-width="1" fill="none"/>
<path d="M33.5 433.7L1573 433.7" stroke="#e0e0e0" stroke-width="1" fill="none"/>
<path d="M33.5 457.8L1573 457.8" stroke="#e0e0e0" stroke-width="1" fill="none"/>
<path d="M33.5 481.9L1573 481.9" stroke="#e0e0e0" stroke-width="1" fill="none"/>
<path d="M33.5 505.9L1573 505.9" stroke="#e0e0e0" stroke-width="1" fill="none"/>
<path d="M33.5 530L1573 530" stroke="#e0e0e0" stroke-width="1" fill="none"/>
<path d="M33.5 554.1L1573 554.1" stroke="#e0e0e0" stroke-width="1" fill="none"/>
<path d="M33.5 578.1L1573 578.1" stroke="#e0e0e0" stroke-width="1" fill="none"/>
<path d="M33.5 602.2L1573 602.2" stroke="#e0e0e0" stroke-width="1" fill="none"/>
<path d="M33.5 626.3L1573 626.3" stroke="#e0e0e0" stroke-width="1" fill="none"/>
<path d="M33.5 650.3L1573 650.3" stroke="#e0e0e0" stroke-width="1" fill="none"/>
<path d="M33.5 674.4L1573 674.4" stroke="#e0e0e0" stroke-width="1" fill="none"/>
<path d="M33.5 698.5L1573 698.5" stroke="#e0e0e0" stroke-width="1" fill="none"/>
<path d="M33.5 722.5L1573 722.5" stroke="#e0e0e0" stroke-width="1" fill="none"/>
<path d="M33.5 746.6L1573 746.6" stroke="#e0e0e0" stroke-width="1" fill="none"/>
<path d="M33.5 770.7L1573 770.7" stroke="#e0e0e0" stroke-width="1" fill="none"/>
<path d="M33.5 794.8L1573 794.8" stroke="#e0e0e0" stroke-width="1" fill="none"/>
<path d="M33.5 818.8L1573 818.8" stroke="#e0e0e0" stroke-width="1" fill="none"/>
<path d="M33.5 842.9L1573 842.9" stroke="#e0e0e0" stroke-width="1" fill="none"/>
<path d="M33.5 867L1573 867" stroke="#e0e0e0" stroke-width="1" fill="none"/>
<path d="M33.5 891L1573 891" stroke="#e0e0e0" stroke-width="1" fill="none"/>
<path d="M33.5 915.1L1573 915.1" stroke="#e0e0e0" stroke-width="1" fill="none"/>
<path d="M33.5 939.2L1573 939.2" stroke="#e0e0e0" stroke-width="1" fill="none"/>
<path d="M126 361.5L126 939.2" stroke="#e0e0e0" stroke-width="1" fill="none"/>
<path d="M271.4 361.5L271.4 939.2" stroke="#e0e0e0" stroke-width="1" fill="none"/>
<path d="M344.3 361.5L344.3 939.2" stroke="#e0e0e0" stroke-width="1" fill="none"/>
<path d="M417.2 361.5L417.2 939.2" stroke="#e0e0e0" stroke-width="1" fill="none"/>
<path d="M490.1 361.5L490.1 939.2" stroke="#e0e0e0" stroke-width="1" fill="none"/>
<path d="M562.9 361.5L562.9 939.2" stroke="#e0e0e0" stroke-width="1" fill="none"/>
<path d="M635.8 361.5L635.8 939.2" stroke="#e0e0e0" stroke-width="1" fill="none"/>
<path d="M708.7 361.5L708.7 939.2" stroke="#e0e0e0" stroke-width="1" fill="none"/>
<path d="M781.6 361.5L781.6 939.2" stroke="#e0e0e0" stroke-width="1" fill="none"/>
<path d="M854.5 361.5L854.5 939.2" stroke="#e0e0e0" stroke-width="1" fill="none"/>
<path d="M927.4 361.5L927.4 939.2" stroke="#e0e0e0" stroke-width="1" fill="none"/>
<path d="M1000.2 361.5L1000.2 939.2" stroke="#e0e0e0" stroke-width="1" fill="none"/>
<path d="M1073.1 361.5L1073.1 939.2" stroke="#e0e0e0" stroke-width="1" fill="none"/>
<path d="M1146 361.5L1146 939.2" stroke="#e0e0e0" stroke-width="1" fill="none"/>
<path d="M1218.9 361.5L1218.9 939.2" stroke="#e0e0e0" stroke-width="1" fill="none"/>
<path d="M1291.8 361.5L1291.8 939.2" stroke="#e0e0e0" stroke-width="1" fill="none"/>
<path d="M1364.7 361.5L1364.7 939.2" stroke="#e0e0e0" stroke-width="1" fill="none"/>
<path d="M1437.6 361.5L1437.6 939.2" stroke="#e0e0e0" stroke-width="1" fill="none"/>
<path d="M1510.4 361.5L1510.4 939.2" stroke="#e0e0e0" stroke-width="1" fill="none"/>
<path d="M1573 361.5L1573 939.2" stroke="#c8c8c8" stroke-width="1" fill="none"/>
<path d="M33.5 433.7L271.4 433.7" stroke="#9fb6d8" stroke-width="1" fill="none"/>
<path d="M33.5 481.9L271.4 481.9" stroke="#9fb6d8" stroke-width="1" fill="none"/>
<rect x="126" y="338" width="145.4" height="23.5" fill="#d3d2d3"/>
<rect x="126" y="359.5" width="145.4" height="2" fill="#217346"/>
<path d="M3 361.4L1573 361.4" stroke="#ababab" stroke-width="1" fill="none"/>
<path d="M33.5 338L33.5 939.2" stroke="#c3c3c3" stroke-width="1" fill="none"/>
<path d="M126 338L126 361" stroke="#cdcdcd" stroke-width="1" fill="none"/>
<path d="M271.4 338L271.4 361" stroke="#cdcdcd" stroke-width="1" fill="none"/>
<path d="M344.3 338L344.3 361" stroke="#cdcdcd" stroke-width="1" fill="none"/>
<path d="M417.2 338L417.2 361" stroke="#cdcdcd" stroke-width="1" fill="none"/>
<path d="M490.1 338L490.1 361" stroke="#cdcdcd" stroke-width="1" fill="none"/>
<path d="M562.9 338L562.9 361" stroke="#cdcdcd" stroke-width="1" fill="none"/>
<path d="M635.8 338L635.8 361" stroke="#cdcdcd" stroke-width="1" fill="none"/>
<path d="M708.7 338L708.7 361" stroke="#cdcdcd" stroke-width="1" fill="none"/>
<path d="M781.6 338L781.6 361" stroke="#cdcdcd" stroke-width="1" fill="none"/>
<path d="M854.5 338L854.5 361" stroke="#cdcdcd" stroke-width="1" fill="none"/>
<path d="M927.4 338L927.4 361" stroke="#cdcdcd" stroke-width="1" fill="none"/>
<path d="M1000.2 338L1000.2 361" stroke="#cdcdcd" stroke-width="1" fill="none"/>
<path d="M1073.1 338L1073.1 361" stroke="#cdcdcd" stroke-width="1" fill="none"/>
<path d="M1146 338L1146 361" stroke="#cdcdcd" stroke-width="1" fill="none"/>
<path d="M1218.9 338L1218.9 361" stroke="#cdcdcd" stroke-width="1" fill="none"/>
<path d="M1291.8 338L1291.8 361" stroke="#cdcdcd" stroke-width="1" fill="none"/>
<path d="M1364.7 338L1364.7 361" stroke="#cdcdcd" stroke-width="1" fill="none"/>
<path d="M1437.6 338L1437.6 361" stroke="#cdcdcd" stroke-width="1" fill="none"/>
<path d="M1510.4 338L1510.4 361" stroke="#cdcdcd" stroke-width="1" fill="none"/>
<path d="M1573 340L1573 361" stroke="#c9c9c9" stroke-width="1" fill="none"/>
<path d="M30 342.5v16h-16z" fill="#c4c4c4"/>
<text x="75" y="353.8" textLength="9.5" lengthAdjust="spacingAndGlyphs" font-size="15" fill="#333">A</text>
<text x="193.9" y="353.8" textLength="9.5" lengthAdjust="spacingAndGlyphs" font-size="15" fill="#217346">B</text>
<text x="303.1" y="353.8" textLength="9.5" lengthAdjust="spacingAndGlyphs" font-size="15" fill="#333">C</text>
<text x="376" y="353.8" textLength="9.5" lengthAdjust="spacingAndGlyphs" font-size="15" fill="#333">D</text>
<text x="449.9" y="353.8" textLength="7.5" lengthAdjust="spacingAndGlyphs" font-size="15" fill="#333">E</text>
<text x="522.7" y="353.8" textLength="7.5" lengthAdjust="spacingAndGlyphs" font-size="15" fill="#333">F</text>
<text x="594.6" y="353.8" textLength="9.5" lengthAdjust="spacingAndGlyphs" font-size="15" fill="#333">G</text>
<text x="667.5" y="353.8" textLength="9.5" lengthAdjust="spacingAndGlyphs" font-size="15" fill="#333">H</text>
<text x="743.4" y="353.8" textLength="3.5" lengthAdjust="spacingAndGlyphs" font-size="15" fill="#333">I</text>
<text x="815.3" y="353.8" textLength="5.5" lengthAdjust="spacingAndGlyphs" font-size="15" fill="#333">J</text>
<text x="886.2" y="353.8" textLength="9.5" lengthAdjust="spacingAndGlyphs" font-size="15" fill="#333">K</text>
<text x="960.3" y="353.8" textLength="7" lengthAdjust="spacingAndGlyphs" font-size="15" fill="#333">L</text>
<text x="1030.4" y="353.8" textLength="12.5" lengthAdjust="spacingAndGlyphs" font-size="15" fill="#333">M</text>
<text x="1104.8" y="353.8" textLength="9.5" lengthAdjust="spacingAndGlyphs" font-size="15" fill="#333">N</text>
<text x="1177.7" y="353.8" textLength="9.5" lengthAdjust="spacingAndGlyphs" font-size="15" fill="#333">O</text>
<text x="1251.1" y="353.8" textLength="8.5" lengthAdjust="spacingAndGlyphs" font-size="15" fill="#333">P</text>
<text x="1323.5" y="353.8" textLength="9.5" lengthAdjust="spacingAndGlyphs" font-size="15" fill="#333">Q</text>
<text x="1396.4" y="353.8" textLength="9.5" lengthAdjust="spacingAndGlyphs" font-size="15" fill="#333">R</text>
<text x="1470" y="353.8" textLength="8" lengthAdjust="spacingAndGlyphs" font-size="15" fill="#333">S</text>
<text x="1543" y="353.8" textLength="8.5" lengthAdjust="spacingAndGlyphs" font-size="15" fill="#333">T</text>
<text x="14.6" y="378.8" textLength="7.2" lengthAdjust="spacingAndGlyphs" font-size="15.5" fill="#303030">1</text>
<path d="M3 385.6L33.5 385.6" stroke="#c9c9c9" stroke-width="1" fill="none"/>
<text x="14.6" y="402.9" textLength="7.2" lengthAdjust="spacingAndGlyphs" font-size="15.5" fill="#303030">2</text>
<path d="M3 409.6L33.5 409.6" stroke="#c9c9c9" stroke-width="1" fill="none"/>
<text x="14.6" y="426.9" textLength="7.2" lengthAdjust="spacingAndGlyphs" font-size="15.5" fill="#303030">3</text>
<path d="M3 433.7L33.5 433.7" stroke="#c9c9c9" stroke-width="1" fill="none"/>
<text x="14.6" y="451" textLength="7.2" lengthAdjust="spacingAndGlyphs" font-size="15.5" fill="#303030">4</text>
<path d="M3 457.8L33.5 457.8" stroke="#c9c9c9" stroke-width="1" fill="none"/>
<text x="14.6" y="475.1" textLength="7.2" lengthAdjust="spacingAndGlyphs" font-size="15.5" fill="#303030">5</text>
<path d="M3 481.9L33.5 481.9" stroke="#c9c9c9" stroke-width="1" fill="none"/>
<text x="14.6" y="499.1" textLength="7.2" lengthAdjust="spacingAndGlyphs" font-size="15.5" fill="#303030">6</text>
<path d="M3 505.9L33.5 505.9" stroke="#c9c9c9" stroke-width="1" fill="none"/>
<text x="14.6" y="523.2" textLength="7.2" lengthAdjust="spacingAndGlyphs" font-size="15.5" fill="#303030">7</text>
<path d="M3 530L33.5 530" stroke="#c9c9c9" stroke-width="1" fill="none"/>
<text x="14.6" y="547.3" textLength="7.2" lengthAdjust="spacingAndGlyphs" font-size="15.5" fill="#303030">8</text>
<path d="M3 554.1L33.5 554.1" stroke="#c9c9c9" stroke-width="1" fill="none"/>
<text x="14.6" y="571.3" textLength="7.2" lengthAdjust="spacingAndGlyphs" font-size="15.5" fill="#303030">9</text>
<path d="M3 578.1L33.5 578.1" stroke="#c9c9c9" stroke-width="1" fill="none"/>
<text x="11" y="595.4" textLength="14.4" lengthAdjust="spacingAndGlyphs" font-size="15.5" fill="#303030">10</text>
<path d="M3 602.2L33.5 602.2" stroke="#c9c9c9" stroke-width="1" fill="none"/>
<text x="11" y="619.5" textLength="14.4" lengthAdjust="spacingAndGlyphs" font-size="15.5" fill="#303030">11</text>
<path d="M3 626.3L33.5 626.3" stroke="#c9c9c9" stroke-width="1" fill="none"/>
<text x="11" y="643.6" textLength="14.4" lengthAdjust="spacingAndGlyphs" font-size="15.5" fill="#303030">12</text>
<path d="M3 650.3L33.5 650.3" stroke="#c9c9c9" stroke-width="1" fill="none"/>
<text x="11" y="667.6" textLength="14.4" lengthAdjust="spacingAndGlyphs" font-size="15.5" fill="#303030">13</text>
<path d="M3 674.4L33.5 674.4" stroke="#c9c9c9" stroke-width="1" fill="none"/>
<text x="11" y="691.7" textLength="14.4" lengthAdjust="spacingAndGlyphs" font-size="15.5" fill="#303030">14</text>
<path d="M3 698.5L33.5 698.5" stroke="#c9c9c9" stroke-width="1" fill="none"/>
<text x="11" y="715.8" textLength="14.4" lengthAdjust="spacingAndGlyphs" font-size="15.5" fill="#303030">15</text>
<rect x="3" y="722.5" width="30.5" height="24.1" fill="#d3d2d3"/>
<rect x="32" y="722.5" width="1.5" height="24.1" fill="#217346"/>
<path d="M3 722.5L33.5 722.5" stroke="#c9c9c9" stroke-width="1" fill="none"/>
<text x="11" y="739.8" textLength="14.4" lengthAdjust="spacingAndGlyphs" font-size="15.5" fill="#217346">16</text>
<path d="M3 746.6L33.5 746.6" stroke="#c9c9c9" stroke-width="1" fill="none"/>
<text x="11" y="763.9" textLength="14.4" lengthAdjust="spacingAndGlyphs" font-size="15.5" fill="#303030">17</text>
<path d="M3 770.7L33.5 770.7" stroke="#c9c9c9" stroke-width="1" fill="none"/>
<text x="11" y="788" textLength="14.4" lengthAdjust="spacingAndGlyphs" font-size="15.5" fill="#303030">18</text>
<path d="M3 794.8L33.5 794.8" stroke="#c9c9c9" stroke-width="1" fill="none"/>
<text x="11" y="812" textLength="14.4" lengthAdjust="spacingAndGlyphs" font-size="15.5" fill="#303030">19</text>
<path d="M3 818.8L33.5 818.8" stroke="#c9c9c9" stroke-width="1" fill="none"/>
<text x="11" y="836.1" textLength="14.4" lengthAdjust="spacingAndGlyphs" font-size="15.5" fill="#303030">20</text>
<path d="M3 842.9L33.5 842.9" stroke="#c9c9c9" stroke-width="1" fill="none"/>
<text x="11" y="860.2" textLength="14.4" lengthAdjust="spacingAndGlyphs" font-size="15.5" fill="#303030">21</text>
<path d="M3 867L33.5 867" stroke="#c9c9c9" stroke-width="1" fill="none"/>
<text x="11" y="884.3" textLength="14.4" lengthAdjust="spacingAndGlyphs" font-size="15.5" fill="#303030">22</text>
<path d="M3 891L33.5 891" stroke="#c9c9c9" stroke-width="1" fill="none"/>
<text x="11" y="908.3" textLength="14.4" lengthAdjust="spacingAndGlyphs" font-size="15.5" fill="#303030">23</text>
<path d="M3 915.1L33.5 915.1" stroke="#c9c9c9" stroke-width="1" fill="none"/>
<text x="11" y="932.4" textLength="14.4" lengthAdjust="spacingAndGlyphs" font-size="15.5" fill="#303030">24</text>
<path d="M3 939.2L1573 939.2" stroke="#c3c3c3" stroke-width="1" fill="none"/>
<text x="36.7" y="426.3" textLength="62.8" lengthAdjust="spacingAndGlyphs" font-size="15" fill="#111" font-weight="bold">행 레이블</text>
<rect x="108.5" y="415.5" width="16.8" height="16.5" fill="#fbfbfb" stroke="#b0b0b0" stroke-width="1"/>
<path d="M114.2 422.5h5.5l-2.8 3z" fill="#555"/>
<text x="129.5" y="426.3" textLength="127.7" lengthAdjust="spacingAndGlyphs" font-size="15" fill="#111" font-weight="bold">평균 : 기부금(만원)</text>
<text x="36.6" y="451.3" textLength="53.8" lengthAdjust="spacingAndGlyphs" font-size="15.5" fill="#222">Change!</text>
<text x="241" y="451.3" textLength="26.4" lengthAdjust="spacingAndGlyphs" font-size="15.5" fill="#222">13.5</text>
<text x="36.6" y="475.4" textLength="29.7" lengthAdjust="spacingAndGlyphs" font-size="15.5" fill="#222">Hey!</text>
<text x="241" y="475.4" textLength="26.4" lengthAdjust="spacingAndGlyphs" font-size="15.5" fill="#222">19.7</text>
<text x="36.7" y="498.3" textLength="43.1" lengthAdjust="spacingAndGlyphs" font-size="15" fill="#111" font-weight="bold">총합계</text>
<text x="240.2" y="499.1" textLength="27.4" lengthAdjust="spacingAndGlyphs" font-size="15.5" fill="#111" font-weight="bold">16.6</text>
<rect x="126" y="722.5" width="145.4" height="24.1" fill="none" stroke="#217346" stroke-width="2"/>
<rect x="268.4" y="743.6" width="5" height="5" fill="#217346" stroke="#fff" stroke-width="1"/>
<rect x="330.7" y="360.5" width="496.6" height="299" fill="#fff" stroke="#e2e2e2" stroke-width="1"/>
<rect x="340.6" y="370.3" width="104.4" height="17.1" fill="#d2d2d2"/>
<text x="345" y="382.8" textLength="95" lengthAdjust="spacingAndGlyphs" font-size="10.5" fill="#333">평균 : 기부금(만원)</text>
<path d="M363 403.5L812 403.5" stroke="#d9d9d9" stroke-width="1" fill="none"/>
<text x="339.4" y="407.4" textLength="12.4" lengthAdjust="spacingAndGlyphs" font-size="11" fill="#595959">25</text>
<path d="M363 443L812 443" stroke="#d9d9d9" stroke-width="1" fill="none"/>
<text x="339.4" y="446.9" textLength="12.4" lengthAdjust="spacingAndGlyphs" font-size="11" fill="#595959">20</text>
<path d="M363 482.4L812 482.4" stroke="#d9d9d9" stroke-width="1" fill="none"/>
<text x="339.4" y="486.3" textLength="12.4" lengthAdjust="spacingAndGlyphs" font-size="11" fill="#595959">15</text>
<path d="M363 521.6L812 521.6" stroke="#d9d9d9" stroke-width="1" fill="none"/>
<text x="339.4" y="525.5" textLength="12.4" lengthAdjust="spacingAndGlyphs" font-size="11" fill="#595959">10</text>
<path d="M363 560.6L812 560.6" stroke="#d9d9d9" stroke-width="1" fill="none"/>
<text x="345.6" y="564.5" textLength="6.2" lengthAdjust="spacingAndGlyphs" font-size="11" fill="#595959">5</text>
<path d="M363 599.8L812 599.8" stroke="#d9d9d9" stroke-width="1" fill="none"/>
<text x="345.6" y="603.7" textLength="6.2" lengthAdjust="spacingAndGlyphs" font-size="11" fill="#595959">0</text>
<rect x="439.6" y="494" width="70.4" height="105.8" fill="#4f81bd"/>
<rect x="663.7" y="446" width="71.3" height="153.8" fill="#4f81bd"/>
<text x="454" y="620.3" textLength="41.6" lengthAdjust="spacingAndGlyphs" font-size="11" fill="#595959">Change!</text>
<text x="688" y="620.3" textLength="23.7" lengthAdjust="spacingAndGlyphs" font-size="11" fill="#595959">Hey!</text>
<rect x="340.6" y="632.5" width="81.4" height="17" fill="#d2d2d2"/>
<text x="344" y="645" textLength="58.4" lengthAdjust="spacingAndGlyphs" font-size="10.5" fill="#333">이메일 제목</text>
<path d="M410 639.9h6l-3 3.3z" fill="#333"/>
<path d="M501.7 744.6h3.6v2.8h3v3.8h-3v3h-3.6v-3h-3v-3.8h3z" fill="#000" stroke="#000" stroke-width="1.5" transform="translate(.5 .5)"/><path d="M501.4 744.3h3.6v2.8h3v3.8h-3v3h-3.6v-3h-3v-3.8h3z" fill="#fff" stroke="#000" stroke-width="1.3"/>
<rect x="1575.5" y="339.5" width="16" height="16" fill="#fff" stroke="#c6c6c6" stroke-width="1"/>
<path d="M1579.5 350l4-5 4 5z" fill="#777"/>
<rect x="1576.5" y="356.5" width="15" height="544" fill="#fff" stroke="#cdcdcd" stroke-width="1"/>
<rect x="1575" y="901" width="16" height="24" fill="#d9d9d9"/>
<rect x="1575.5" y="925.5" width="16" height="15" fill="#fff" stroke="#c6c6c6" stroke-width="1"/>
<path d="M1579.5 931l4 5 4-5z" fill="#555"/>
<path d="M31 948l-4.5 4 4.5 4z" fill="#c4c4c4"/><path d="M50 948l4.5 4-4.5 4z" fill="#c4c4c4"/>
<rect x="88.3" y="940" width="95.4" height="21" fill="#fff"/>
<rect x="88.3" y="959.5" width="95.4" height="2" fill="#217346"/>
<path d="M88.3 940L88.3 961" stroke="#c3c3c3" stroke-width="1" fill="none"/><path d="M183.7 940L183.7 961" stroke="#c3c3c3" stroke-width="1" fill="none"/>
<text x="98.6" y="954.5" textLength="68.1" lengthAdjust="spacingAndGlyphs" font-size="14" fill="#217346">피벗-T검정</text>
<text x="194" y="954.5" textLength="105" lengthAdjust="spacingAndGlyphs" font-size="14" fill="#444">01_이메일모금액</text>
<path d="M310 943L310 960" stroke="#ababab" stroke-width="1" fill="none"/>
<circle cx="346" cy="952.5" r="7.5" fill="none" stroke="#777" stroke-width="1.2"/><path d="M346 948.5v8M342 952.5h8" stroke="#777" stroke-width="1.2"/>
<circle cx="956.3" cy="947.5" r="1" fill="#999"/>
<circle cx="956.3" cy="951.5" r="1" fill="#999"/>
<circle cx="956.3" cy="955.5" r="1" fill="#999"/>
<rect x="970.5" y="944.5" width="15" height="16" fill="#fff" stroke="#c6c6c6" stroke-width="1"/>
<path d="M980 948.5l-4.5 4 4.5 4z" fill="#555"/>
<rect x="985.5" y="944.5" width="541" height="16" fill="#fff" stroke="#c6c6c6" stroke-width="1"/>
<rect x="1527" y="945" width="30" height="15" fill="#dadada"/>
<rect x="1557.5" y="944.5" width="16" height="16" fill="#fff" stroke="#c6c6c6" stroke-width="1"/>
<path d="M1563.5 948.5l4.5 4-4.5 4z" fill="#555"/>
<path d="M3 964.6L1594 964.6" stroke="#d4d4d4" stroke-width="1" fill="none"/>
<path d="M3 966L1594 966" stroke="#fbfbfb" stroke-width="1" fill="none"/>
<path d="M3.5 288L3.5 966" stroke="#f4f4f4" stroke-width="1" fill="none"/>
<path d="M3 967.2L1594 967.2" stroke="#060606" stroke-width="1" fill="none"/>
<path d="M1281 966.1L1323 966.1" stroke="#b9b9b9" stroke-width="1.8" fill="none"/>
</svg>
<!-- p4_panel -->
<div class="a" style="left:1598px;top:0;width:321px;height:1015px;background:#fff;border-left:1px solid #0c0c0c"></div>
<svg style="left:0;top:0;font-family:'Liberation Sans',sans-serif;will-change:transform;" width="1919" height="1015" viewBox="0 0 1919 1015">
<path d="M1619 13l4 4 4-4" fill="none" stroke="#555" stroke-width="1.5"/>
<text x="1728.6" y="18.9" textLength="61.4" lengthAdjust="spacingAndGlyphs" font-size="13.5" fill="#2f2f35" stroke="#2f2f35" stroke-width=".4">참가자(53)</text>
<rect x="1622" y="43" width="275" height="25" fill="#f1f1f6" rx="7"/>
<rect x="1622.5" y="43.5" width="136" height="24" fill="#fff" stroke="#e9e9ef" stroke-width="1" rx="7"/>
<text x="1667" y="59.2" textLength="46.5" lengthAdjust="spacingAndGlyphs" font-size="11.5" fill="#0e71eb" stroke="#0e71eb" stroke-width=".35">토론자(5)</text>
<text x="1801" y="59.2" textLength="52.8" lengthAdjust="spacingAndGlyphs" font-size="11.5" fill="#6e7680" stroke="#6e7680" stroke-width=".35">참석자(48)</text>
<rect x="1617.5" y="86.5" width="26" height="26" fill="#17a085" rx="6"/>
<text x="1625" y="103.8" textLength="11" lengthAdjust="spacingAndGlyphs" font-size="12.5" fill="#fff" font-weight="bold">마</text>
<text x="1656.2" y="104.2" textLength="103.8" lengthAdjust="spacingAndGlyphs" font-size="13.5" fill="#2f2f35">마소캠퍼스TA (나)</text>
<g transform="translate(1895.3 99.8)" fill="none" stroke="#e03a3a" stroke-width="1.1"><path d="M3.5 -4.5h-9.5a1.5 1.5 0 0 0-1.5 1.5v7a1.5 1.5 0 0 0 1.5 1.5h8.5"/><path d="M4 -1.5l3.5-2.5v8l-3.5-2.5"/><path d="M-7.5 7.5L7 -7.5" stroke-width="1.2"/></g>
<g transform="translate(1871.2 100)" fill="none" stroke="#e03a3a" stroke-width="1"><rect x="-2.3" y="-7.3" width="4.6" height="8.5" rx="2.3"/><path d="M-4.5 -1.5c0 3 2 4.7 4.5 4.7s4.5-1.7 4.5-4.7M0 3.2v3M-2.5 6.6h5"/><path d="M-7.5 8L7.5 -8" stroke-width="1.2"/></g>
<defs><clipPath id="lg"><rect x="1617.5" y="128" width="26" height="26" rx="6"/></clipPath></defs>
<g clip-path="url(#lg)"><rect x="1617.5" y="128" width="26" height="26" fill="#fff"/><path d="M1617.5 143l19 11h-19z" fill="#a9cbee" opacity=".75"/><path d="M1617.5 147.5c6 1 10 3 14 6.5h-14z" fill="#6aa2dc" opacity=".7"/><path d="M1617.5 143l19 11" stroke="#dbe9f8" stroke-width="1" fill="none"/></g>
<text x="1619" y="142.7" textLength="11.5" lengthAdjust="spacingAndGlyphs" font-size="3.8" fill="#c0211f" font-weight="bold">MASO</text><text x="1631.5" y="142.7" textLength="10.5" lengthAdjust="spacingAndGlyphs" font-size="3" fill="#333" font-weight="bold">CAMPUS</text>
<text x="1656.2" y="145.8" textLength="156.8" lengthAdjust="spacingAndGlyphs" font-size="13.5" fill="#2f2f35">Masocampus MM (호스트)</text>
<g transform="translate(1895.3 141.3)" fill="none" stroke="#e03a3a" stroke-width="1.1"><path d="M3.5 -4.5h-9.5a1.5 1.5 0 0 0-1.5 1.5v7a1.5 1.5 0 0 0 1.5 1.5h8.5"/><path d="M4 -1.5l3.5-2.5v8l-3.5-2.5"/><path d="M-7.5 7.5L7 -7.5" stroke-width="1.2"/></g>
<g transform="translate(1871.2 141.5)" fill="none" stroke="#e03a3a" stroke-width="1"><rect x="-2.3" y="-7.3" width="4.6" height="8.5" rx="2.3"/><path d="M-4.5 -1.5c0 3 2 4.7 4.5 4.7s4.5-1.7 4.5-4.7M0 3.2v3M-2.5 6.6h5"/><path d="M-7.5 8L7.5 -8" stroke-width="1.2"/></g>
<g transform="translate(1847 141)"><path d="M-5 5.2a3.3 3.3 0 0 1-.6-6.5a4.6 4.6 0 0 1 8.7-1.3a3.9 3.9 0 0 1 1.4 7.8z" fill="#fff" stroke="#8e8e93" stroke-width="1.1"/><circle cx="0" cy="1" r="1.3" fill="#f0323c"/></g>
<rect x="1617.5" y="169" width="26" height="26" fill="#f29b13" rx="6"/>
<text x="1625" y="186.2" textLength="11" lengthAdjust="spacingAndGlyphs" font-size="12.5" fill="#fff" font-weight="bold">이</text>
<g transform="translate(1895.3 182.3)" fill="none" stroke="#e03a3a" stroke-width="1.1"><path d="M3.5 -4.5h-9.5a1.5 1.5 0 0 0-1.5 1.5v7a1.5 1.5 0 0 0 1.5 1.5h8.5"/><path d="M4 -1.5l3.5-2.5v8l-3.5-2.5"/><path d="M-7.5 7.5L7 -7.5" stroke-width="1.2"/></g>
<rect x="1839" y="176" width="16" height="12" fill="#12a83b" rx="2"/>
<path d="M1847 185.5v-6M1844.3 181.8l2.7-2.7 2.7 2.7" fill="none" stroke="#fff" stroke-width="1.5"/>
<rect x="1868.8" y="174.5" width="5" height="9.5" rx="2.5" fill="#6e6e78"/><path d="M1866.8 181c0 3 2 4.7 4.5 4.7s4.5-1.7 4.5-4.7M1871.3 185.7v3M1868.8 189h5" fill="none" stroke="#8e8e93" stroke-width="1"/>
<rect x="1617.5" y="210" width="26" height="26" fill="#f29b13" rx="6"/>
<text x="1625.2" y="227.5" textLength="10.5" lengthAdjust="spacingAndGlyphs" font-size="13.2" fill="#fff" font-weight="bold">M</text>
<text x="1656.2" y="227.8" textLength="127.6" lengthAdjust="spacingAndGlyphs" font-size="13.5" fill="#2f2f35">MasoTA (공동 호스트)</text>
<g transform="translate(1895.3 223.3)" fill="none" stroke="#e03a3a" stroke-width="1.1"><path d="M3.5 -4.5h-9.5a1.5 1.5 0 0 0-1.5 1.5v7a1.5 1.5 0 0 0 1.5 1.5h8.5"/><path d="M4 -1.5l3.5-2.5v8l-3.5-2.5"/><path d="M-7.5 7.5L7 -7.5" stroke-width="1.2"/></g>
<g transform="translate(1871.2 223.5)" fill="none" stroke="#e03a3a" stroke-width="1"><rect x="-2.3" y="-7.3" width="4.6" height="8.5" rx="2.3"/><path d="M-4.5 -1.5c0 3 2 4.7 4.5 4.7s4.5-1.7 4.5-4.7M0 3.2v3M-2.5 6.6h5"/><path d="M-7.5 8L7.5 -8" stroke-width="1.2"/></g>
<g transform="translate(1847 223)"><path d="M-5 5.2a3.3 3.3 0 0 1-.6-6.5a4.6 4.6 0 0 1 8.7-1.3a3.9 3.9 0 0 1 1.4 7.8z" fill="#fff" stroke="#8e8e93" stroke-width="1.1"/><circle cx="0" cy="1" r="2.2" fill="#f0323c"/></g>
<rect x="1617.5" y="251" width="26" height="26" fill="#d4560c" rx="6"/>
<text x="1625.2" y="268.5" textLength="10.5" lengthAdjust="spacingAndGlyphs" font-size="13.2" fill="#fff" font-weight="bold">M</text>
<text x="1656.2" y="268.8" textLength="90.8" lengthAdjust="spacingAndGlyphs" font-size="13.5" fill="#2f2f35">masocampusTA</text>
<g transform="translate(1895.3 264.3)" fill="none" stroke="#e03a3a" stroke-width="1.1"><path d="M3.5 -4.5h-9.5a1.5 1.5 0 0 0-1.5 1.5v7a1.5 1.5 0 0 0 1.5 1.5h8.5"/><path d="M4 -1.5l3.5-2.5v8l-3.5-2.5"/><path d="M-7.5 7.5L7 -7.5" stroke-width="1.2"/></g>
<g transform="translate(1871.2 264.5)" fill="none" stroke="#e03a3a" stroke-width="1"><rect x="-2.3" y="-7.3" width="4.6" height="8.5" rx="2.3"/><path d="M-4.5 -1.5c0 3 2 4.7 4.5 4.7s4.5-1.7 4.5-4.7M0 3.2v3M-2.5 6.6h5"/><path d="M-7.5 8L7.5 -8" stroke-width="1.2"/></g>
<rect x="1631.4" y="314" width="38.3" height="23" fill="#f1f1f6" rx="6.5"/>
<text x="1638.5" y="328.2" textLength="24" lengthAdjust="spacingAndGlyphs" font-size="12" fill="#222" stroke="#222" stroke-width=".25">초대</text>
<rect x="1701" y="314" width="104.5" height="23" fill="#f1f1f6" rx="6.5"/>
<text x="1708.5" y="328.2" textLength="89.5" lengthAdjust="spacingAndGlyphs" font-size="12" fill="#222" stroke="#222" stroke-width=".25">나만 음소거 해제</text>
<rect x="1837" y="314" width="51" height="23" fill="#f1f1f6" rx="6.5"/>
<text x="1844.5" y="328.2" textLength="35.5" lengthAdjust="spacingAndGlyphs" font-size="12" fill="#222" stroke="#222" stroke-width=".25">손들기</text>
<path d="M1619.8 351.6L1919 351.6" stroke="#ececf0" stroke-width="1" fill="none"/>
<path d="M1619 372l4 4 4-4" fill="none" stroke="#555" stroke-width="1.5"/>
<text x="1705" y="376.4" textLength="108.5" lengthAdjust="spacingAndGlyphs" font-size="13.5" fill="#2f2f35" font-weight="bold">Zoom 웨비나 채팅</text>
<defs><clipPath id="cc"><rect x="1600" y="396.8" width="310" height="300"/></clipPath></defs>
<g clip-path="url(#cc)"><text x="1618.5" y="402.1" textLength="74" lengthAdjust="spacingAndGlyphs" font-size="12.5" fill="#555">나로부터 에게</text><text x="1696" y="402.1" textLength="119.5" lengthAdjust="spacingAndGlyphs" font-size="12.5" fill="#0e71eb">모든 토론자 및 참석자:</text></g>
<text x="1618.3" y="423.6" textLength="207.2" lengthAdjust="spacingAndGlyphs" font-size="13.5" fill="#2f2f35">첫번째 시트-테이블에 마우스 위치</text>
<text x="1618.3" y="448.6" textLength="243.2" lengthAdjust="spacingAndGlyphs" font-size="13.5" fill="#2f2f35">분석 탭-피벗 테이블-새로운 워크시트-확</text>
<text x="1618.3" y="473.7" textLength="11.8" lengthAdjust="spacingAndGlyphs" font-size="13.5" fill="#2f2f35">인</text>
<text x="1618.3" y="498.7" textLength="242.2" lengthAdjust="spacingAndGlyphs" font-size="13.5" fill="#2f2f35">이메일 제목을 행에, 기부금을 값에 드래</text>
<text x="1618.3" y="523.8" textLength="43.6" lengthAdjust="spacingAndGlyphs" font-size="13.5" fill="#2f2f35">그 드랍</text>
<text x="1618.3" y="548.8" textLength="246.2" lengthAdjust="spacingAndGlyphs" font-size="13.5" fill="#2f2f35">기부금 필드 마우스 우클릭-값 요약 기준-</text>
<text x="1618.3" y="573.8" textLength="26.2" lengthAdjust="spacingAndGlyphs" font-size="13.5" fill="#2f2f35">평균</text>
<text x="1618.3" y="598.9" textLength="204.2" lengthAdjust="spacingAndGlyphs" font-size="13.5" fill="#2f2f35">새로운 워크시트 이름: 피벗-T검정</text>
<text x="1618.3" y="623.9" textLength="103.6" lengthAdjust="spacingAndGlyphs" font-size="13.5" fill="#2f2f35">분석 탭-피벗차트</text>
<text x="1618.3" y="649" textLength="165.7" lengthAdjust="spacingAndGlyphs" font-size="13.5" fill="#2f2f35">새로 막대형-확인-요약 삭제</text>
<rect x="1909" y="398" width="8" height="269" fill="#ededf2" rx="4"/>
<circle cx="1913" cy="666" r="4" fill="#8e8e93"/>
<path d="M1599 672L1919 672" stroke="#e6e6ea" stroke-width="1" fill="none"/>
<text x="1616" y="698.9" textLength="54" lengthAdjust="spacingAndGlyphs" font-size="12" fill="#2f2f35">받는 사람:</text>
<rect x="1679" y="684.7" width="135" height="22.8" fill="#f1f1f6" rx="6"/>
<text x="1686" y="698.8" textLength="107.6" lengthAdjust="spacingAndGlyphs" font-size="11.5" fill="#222" stroke="#222" stroke-width=".35">모든 토론자 및 참석자</text>
<path d="M1799 694l3.3 3.3 3.3-3.3" fill="none" stroke="#222" stroke-width="1.5"/>
<rect x="1880.5" y="684" width="23" height="23" fill="#fff" stroke="#dcdce2" stroke-width="1" rx="6"/>
<circle cx="1888.5" cy="695.5" r=".9" fill="#555"/>
<circle cx="1892" cy="695.5" r=".9" fill="#555"/>
<circle cx="1895.5" cy="695.5" r=".9" fill="#555"/>
<path d="M1616.5 714L1616.5 731" stroke="#111" stroke-width="1" fill="none"/>
<text x="1618" y="726.9" textLength="119" lengthAdjust="spacingAndGlyphs" font-size="13" fill="#a9a9b5">여기에 메시지 입력...</text>
</svg></body></html>
